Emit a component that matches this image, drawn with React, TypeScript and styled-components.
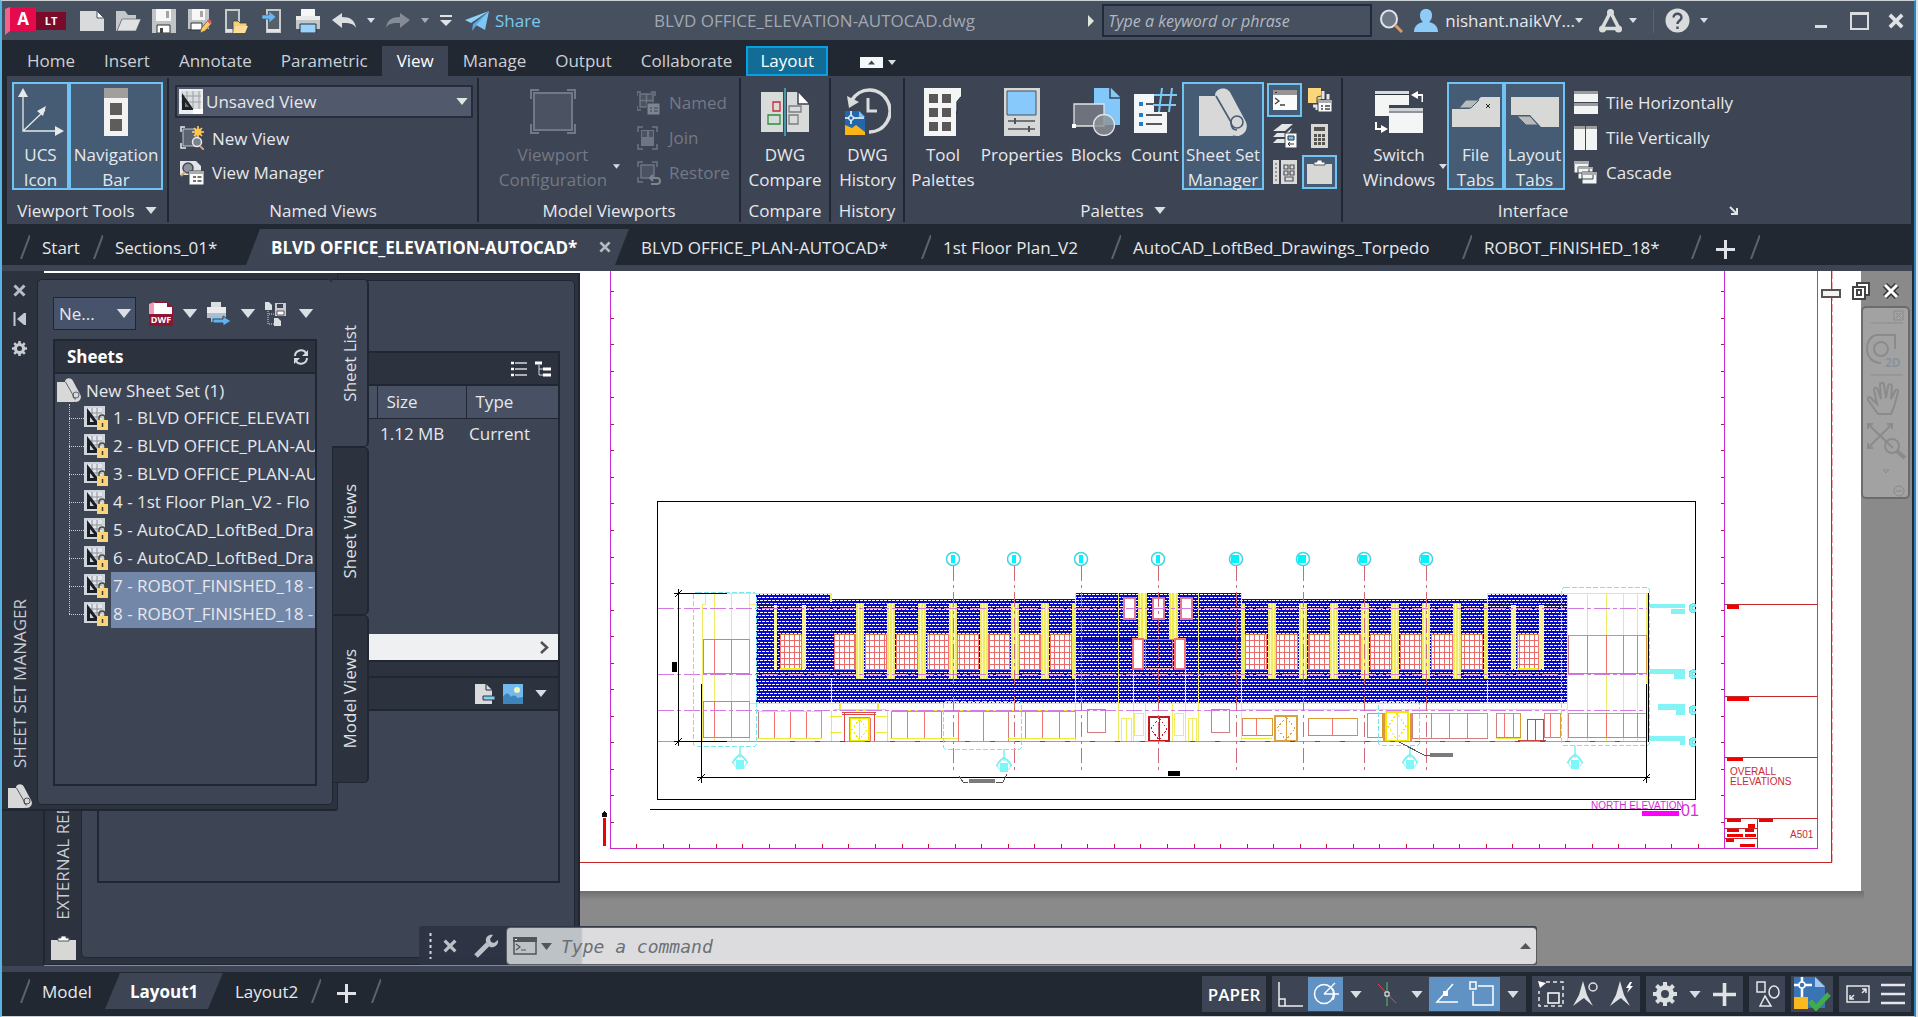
import React from "react";
import styled, { createGlobalStyle, css } from "styled-components";

const c = {
  title: "#46505f",
  dark: "#222831",
  panel: "#3d4453",
  strip: "#2d333e",
  line: "#202632",
  text: "#e6e8ec",
  dim: "#737986",
  on: "#455c74",
  onEdge: "#6fc4f4",
};

const Global = createGlobalStyle`
  * { box-sizing: border-box; }
  body { margin: 0; background: #dfe2e5; font-family: "Open Sans", "Noto Sans", sans-serif; font-size: 17px; color: ${c.text}; }
  button, input, select { font: inherit; color: inherit; background: none; border: 0; padding: 0; margin: 0; border-radius: 0; }
  svg { display: block; flex: none; }
  ul { list-style: none; margin: 0; padding: 0; }
`;

const Frame = styled.div`
  display: flex;
  flex-direction: column;
  height: 100vh;
  min-height: 800px;
  margin-right: 2px;
  overflow: hidden;
  background: ${c.dark};
  border-style: solid;
  border-width: 1px 2px 1px 2px;
  border-color: #cdd2d6 #2a84be #cdd2d6 #56b3e2;
`;

const Center = css`
  display: flex;
  align-items: center;
  justify-content: center;
`;

/* ---------- title bar ---------- */
const TitleBar = styled.header`
  display: flex;
  align-items: center;
  height: 39px;
  flex: none;
  padding-left: 3px;
  background: ${c.title};
`;
const Logo = styled.div`
  display: flex;
  align-items: center;
  width: 69px;
  height: 32px;
`;
const LogoLabel = styled.span`
  ${Center}
  width: 30px;
  height: 18px;
  background: #7a0a2a;
  color: #fff;
  font-size: 11px;
  font-weight: 700;
`;
const IconButton = styled.button<{ $w?: number }>`
  ${Center}
  width: ${(p) => p.$w ?? 36}px;
  height: 32px;
  flex: none;
`;
const Share = styled.button`
  display: flex;
  align-items: center;
  gap: 6px;
  padding-left: 7px;
  color: #7cc8ee;
`;
const FileName = styled.h1`
  flex: 1;
  margin: 0;
  text-align: center;
  font-size: 17px;
  font-weight: 400;
  color: #a2a8b2;
  white-space: nowrap;
`;
const Search = styled.input`
  width: 270px;
  height: 33px;
  margin: 0 7px 0 8px;
  padding-left: 4px;
  border: 2px solid #1f2a3c;
  font-size: 16px;
  font-style: italic;
  &::placeholder { color: #b3b9c4; opacity: 1; }
`;
const User = styled.button`
  display: flex;
  align-items: center;
  gap: 7px;
  margin-left: 11px;
  white-space: nowrap;
`;
const Apps = styled.button`
  display: flex;
  align-items: center;
  gap: 7px;
  margin: 0 5px 0 16px;
`;
const Rule = styled.span`
  width: 1px;
  height: 24px;
  background: #596372;
`;
const WindowControls = styled.div`
  display: flex;
  margin-left: 84px;
`;

/* ---------- menu ---------- */
const MenuBar = styled.nav`
  display: flex;
  align-items: flex-end;
  height: 36px;
  flex: none;
  padding-left: 10px;
`;
const MenuTab = styled.button<{ $on?: boolean; $context?: boolean }>`
  height: 30px;
  padding: ${(p) => (p.$context ? "0 12px" : "0 14px 0 15px")};
  color: ${(p) => (p.$on || p.$context ? "#fff" : "#ccd0d6")};
  background: ${(p) => (p.$context ? "#126c96" : p.$on ? c.panel : "none")};
  border: ${(p) => (p.$context ? "2px solid #06a0e4" : "0")};
  line-height: 26px;
`;
const MenuExtra = styled.button`
  display: flex;
  align-items: center;
  gap: 5px;
  height: 28px;
  margin-left: 32px;
`;

/* ---------- ribbon ---------- */
const Ribbon = styled.section`
  display: flex;
  height: 148px;
  flex: none;
  margin: 0 3px 0 5px;
  background: ${c.panel};
`;
const Group = styled.div<{ $w: number; $last?: boolean }>`
  display: flex;
  flex-direction: column;
  width: ${(p) => p.$w}px;
  flex: none;
  margin: 2px 0;
  border-right: ${(p) => (p.$last ? "0" : `2px solid ${c.line}`)};
`;
const Tools = styled.div<{ $pad?: number }>`
  display: flex;
  height: 112px;
  padding: 4px 0 0 ${(p) => p.$pad ?? 0}px;
`;
const GroupName = styled.div`
  display: flex;
  align-items: center;
  height: 32px;
  padding-top: 8px;
`;
const GroupText = styled.button`
  ${Center}
  flex: 1;
  gap: 10px;
`;
const Big = styled.button<{ $w: number; $on?: boolean }>`
  display: flex;
  flex-direction: column;
  align-items: center;
  gap: 6px;
  width: ${(p) => p.$w}px;
  height: 108px;
  flex: none;
  padding-top: 4px;
  border: 2px solid ${(p) => (p.$on ? c.onEdge : "transparent")};
  background: ${(p) => (p.$on ? c.on : "none")};
  line-height: 25px;
  white-space: pre;
  &:disabled { color: ${c.dim}; }
`;
const Stack = styled.div<{ $ml?: number }>`
  display: flex;
  flex-direction: column;
  padding-top: 3px;
  margin-left: ${(p) => p.$ml ?? 0}px;
`;
const Row = styled.button<{ $gap?: number }>`
  display: flex;
  align-items: center;
  gap: 8px;
  height: 36px;
  padding-left: ${(p) => p.$gap ?? 0}px;
  white-space: nowrap;
  &:disabled { color: ${c.dim}; }
`;
const ViewBox = styled.label`
  display: flex;
  align-items: center;
  gap: 3px;
  width: 298px;
  height: 34px;
  margin-bottom: 3px;
  padding: 0 3px 0 2px;
  border: 2px solid #262c3a;
  background: #515a6d;
`;
const Select = styled.select`
  flex: 1;
  min-width: 0;
  appearance: none;
  outline: 0;
`;
const DownMark = styled.span`
  width: 8px;
  padding-top: 82px;
`;
const Mini = styled.div`
  display: grid;
  grid-template-columns: 35px 35px;
  grid-auto-rows: 34px;
  row-gap: 2px;
  padding-top: 1px;
  margin-left: 3px;
`;
const MiniButton = styled.button<{ $on?: boolean }>`
  ${Center}
  border: 2px solid ${(p) => (p.$on ? c.onEdge : "transparent")};
  background: ${(p) => (p.$on ? c.on : "none")};
`;

/* ---------- tab strips ---------- */
const TabStrip = styled.nav<{ $h: number }>`
  display: flex;
  align-items: flex-end;
  height: ${(p) => p.$h}px;
  flex: none;
  padding-left: 18px;
`;
const FileTab = styled.button<{ $w: number }>`
  width: ${(p) => p.$w}px;
  height: 36px;
  flex: none;
  padding-left: 12px;
  text-align: left;
  white-space: nowrap;
`;
const ActiveTab = styled.div<{ $w: number; $slant: number }>`
  display: flex;
  align-items: center;
  justify-content: space-between;
  width: ${(p) => p.$w}px;
  height: 36px;
  padding: 0 18px 0 25px;
  font-weight: 700;
  color: #fff;
  background: ${c.panel};
  white-space: nowrap;
  clip-path: polygon(${(p) => p.$slant}px 0, 100% 0, calc(100% - ${(p) => p.$slant}px) 100%, 0 100%);
`;
const SlashBox = styled.span`
  ${Center}
  width: 10px;
  height: 36px;
  flex: none;
`;

/* ---------- workspace ---------- */
const Workspace = styled.main`
  position: relative;
  flex: 1;
  min-height: 0;
  margin-right: 2px;
  border: solid ${c.panel};
  border-width: 6px 0;
  background: #8a8a8a;
`;
const Sheet = styled.svg`
  width: 100%;
  height: 100%;
`;
const Dock = styled.div`
  position: absolute;
  left: 0;
  top: 0;
  bottom: 0;
  width: 42px;
  background: ${c.strip};
`;
const Refs = styled.section`
  position: absolute;
  left: 41px;
  top: 2px;
  bottom: 1px;
  width: 537px;
  display: flex;
  padding-right: 3px;
  background: ${c.strip};
  border: solid ${c.line};
  border-width: 1px 2px 1px 2px;
`;
const Strip = styled.div<{ $w: number }>`
  display: flex;
  flex-direction: column;
  align-items: center;
  width: ${(p) => p.$w}px;
  flex: none;
  padding-top: 6px;
`;
const Vertical = styled.span`
  writing-mode: vertical-rl;
  transform: rotate(180deg);
  margin-top: auto;
  line-height: 20px;
  white-space: nowrap;
  color: #c9cdd4;
`;
const Emblem = styled.span<{ $pb?: number }>`
  ${Center}
  width: 26px;
  height: 26px;
  flex: none;
  margin: 15px 0 ${(p) => p.$pb ?? 0}px;
`;
const RefsBody = styled.div`
  display: flex;
  flex-direction: column;
  flex: 1;
  margin: 6px 0;
  padding: 70px 14px 74px 15px;
  background: ${c.panel};
  border: 1px solid ${c.line};
  border-radius: 5px;
`;
const BarHead = styled.div`
  display: flex;
  align-items: center;
  justify-content: flex-end;
  gap: 8px;
  height: 35px;
  flex: none;
  padding-right: 7px;
  background: ${c.strip};
  border: 2px solid ${c.line};
`;
const Splitter = styled.div`
  height: 14px;
  flex: none;
  background: ${c.strip};
  border: solid ${c.line};
  border-width: 0 2px;
`;
const ListBox = styled.div<{ $h?: number }>`
  ${(p) => (p.$h ? `height: ${p.$h}px; flex: none;` : "flex: 1;")}
  border: 2px solid ${c.line};
  border-top: 0;
  display: flex;
  flex-direction: column;
  justify-content: space-between;
`;
const Files = styled.table`
  width: 100%;
  border-collapse: collapse;
  table-layout: fixed;
  th, td { text-align: left; font-weight: 400; padding: 0; line-height: 24px; }
  th { height: 32px; background: #485163; border: solid ${c.line}; border-width: 0 0 1px 1px; padding-left: 9px; }
  td { height: 32px; padding-left: 3px; }
`;
const ScrollBar = styled.button`
  display: flex;
  align-items: center;
  justify-content: flex-end;
  width: 100%;
  height: 26px;
  padding-right: 9px;
  background: #eff0f1;
`;

const SetPalette = styled.section`
  position: absolute;
  left: 0;
  top: 2px;
  display: flex;
  align-items: flex-start;
`;
const Shell = styled.div`
  display: flex;
  width: 336px;
  height: 538px;
  padding-right: 4px;
  background: ${c.strip};
  border: solid ${c.line};
  border-width: 0 1px 2px 0;
  border-radius: 0 0 3px 0;
`;
const StripIcons = styled.div`
  display: flex;
  flex-direction: column;
  align-items: center;
  gap: 15px;
  padding-top: 5px;
`;
const SetBody = styled.div`
  display: flex;
  flex-direction: column;
  flex: 1;
  gap: 9px;
  min-width: 0;
  margin: 6px 0 4px;
  padding: 17px 15px 18px 15px;
  background: ${c.panel};
  border: solid ${c.line};
  border-width: 1px;
  border-radius: 5px;
`;
const SetTools = styled.div`
  display: flex;
  align-items: center;
  height: 33px;
  flex: none;
`;
const SetPick = styled.label`
  display: flex;
  align-items: center;
  width: 83px;
  height: 33px;
  flex: none;
  margin-right: 10px;
  padding: 0 3px 0 5px;
  background: #46536b;
  border: 1px solid ${c.line};
`;
const SheetsBox = styled.div`
  display: flex;
  flex-direction: column;
  flex: 1;
  border: 2px solid ${c.line};
  overflow: hidden;
`;
const SheetsHead = styled.div`
  display: flex;
  align-items: center;
  justify-content: space-between;
  height: 33px;
  flex: none;
  padding: 0 6px 0 12px;
  font-weight: 700;
  color: #fff;
  background: ${c.strip};
  border-bottom: 2px solid ${c.line};
`;
const TreeRoot = styled.div`
  display: flex;
  align-items: center;
  gap: 5px;
  height: 30px;
  padding: 2px 0 0 2px;
  white-space: nowrap;
`;
const Tree = styled.ul`
  position: relative;
  margin-left: 14px;
  &::before {
    content: "";
    position: absolute;
    left: 0;
    top: 0;
    bottom: 14px;
    border-left: 1px dotted #c9ccd2;
  }
`;
const Leaf = styled.li`
  display: flex;
  align-items: center;
  height: 28px;
  &::before {
    content: "";
    width: 15px;
    flex: none;
    border-top: 1px dotted #c9ccd2;
  }
`;
const LeafText = styled.span<{ $on?: boolean }>`
  flex: 1;
  margin-left: 3px;
  padding-left: 2px;
  line-height: 28px;
  white-space: nowrap;
  background: ${(p) => (p.$on ? "#7387a9" : "none")};
`;
const SideTabs = styled.div`
  position: relative;
  display: flex;
  flex-direction: column;
  width: 37px;
  margin: 6px 0 0 -6px;
`;
const SideTab = styled.button<{ $on?: boolean }>`
  ${Center}
  height: 168px;
  background: ${(p) => (p.$on ? c.panel : c.strip)};
  border: solid ${c.line};
  border-width: 1px 2px 1px ${(p) => (p.$on ? 0 : 1)}px;
  border-radius: 0 5px 5px 0;
  span { margin: 0; color: #dde0e4; }
`;

const DocControls = styled.div`
  position: absolute;
  right: 6px;
  top: 4px;
  display: flex;
`;
const NavPane = styled.div`
  position: absolute;
  right: 2px;
  top: 35px;
  width: 49px;
  height: 193px;
  background: #a2a2a2;
  border: 2px solid #6c6c6c;
  border-radius: 5px;
`;
const Command = styled.div`
  position: absolute;
  left: 417px;
  right: 375px;
  bottom: 1px;
  display: flex;
  height: 39px;
  border-radius: 3px;
  background: rgba(45, 51, 66, 0.92);
`;
const CommandTools = styled.div`
  display: flex;
  align-items: center;
  gap: 11px;
  width: 87px;
  flex: none;
  padding-left: 10px;
`;
const CommandField = styled.div`
  display: flex;
  align-items: center;
  gap: 4px;
  flex: 1;
  height: 38px;
  margin-top: 1px;
  padding: 0 5px 0 6px;
  border: 1px solid #5a5d60;
  border-radius: 4px;
  background: linear-gradient(90deg, #bdc2c6 74px, #dcdcde 76px);
`;
const CommandInput = styled.input`
  flex: 1;
  margin-left: 5px;
  font-family: "DejaVu Sans Mono", monospace;
  font-size: 18px;
  font-style: italic;
  &::placeholder { color: #6c7075; opacity: 1; }
`;

/* ---------- bottom bar ---------- */
const Bottom = styled.footer`
  display: flex;
  justify-content: space-between;
  height: 44px;
  flex: none;
  background: ${c.dark};
`;
const Status = styled.div`
  display: flex;
  align-items: flex-start;
  gap: 6px;
  padding: 4px 3px 0 0;
`;
const StatusBox = styled.div`
  display: flex;
  height: 36px;
  padding: 1px;
  background: ${c.panel};
`;
const StatusButton = styled.button<{ $w?: number; $on?: boolean }>`
  ${Center}
  width: ${(p) => p.$w ?? 35}px;
  height: 34px;
  background: ${(p) => (p.$on ? "#6092c4" : "none")};
  white-space: nowrap;
`;
const Paper = styled(StatusButton)`
  width: 62px;
  font-weight: 600;
  color: #fff;
`;

/* ---------- icons ---------- */
type KidsProps = { w?: number; h?: number; vb?: string; children?: React.ReactNode };
const I = ({ w = 24, h = 24, vb, children }: KidsProps) => (
  <svg width={w} height={h} viewBox={vb ?? `0 0 ${w} ${h}`} fill="none" aria-hidden="true">{children}</svg>
);
const Caret = ({ w = 8, color = "#d9dde4" }: { w?: number; color?: string }) => (
  <I w={w} h={Math.ceil(w / 2) + 1} vb="0 0 8 5"><path d="M0 0h8L4 5z" fill={color} /></I>
);
const Slash = () => (
  <SlashBox><I w={10} h={24}><path d="M1 24L10 0" stroke="#5b626e" strokeWidth="2" /></I></SlashBox>
);
const Plus = ({ size = 19 }: { size?: number }) => (
  <I w={size} h={size} vb="0 0 19 19"><path d="M9.500 0v19M0 9.500h19" stroke="#dfe2e6" strokeWidth="3" /></I>
);
const Cross = ({ size = 13, color = "#c4c7cd" }: { size?: number; color?: string }) => (
  <I w={size} h={size} vb="0 0 13 13"><path d="M1.500 1.500l10 10M11.500 1.500l-10 10" stroke={color} strokeWidth="3" /></I>
);
const NewIcon = () => <I w={24} h={20}><path d="M0 0h17l7 7v13H0z" fill="#d8dadb" /><path d="M17 0v7h7z" fill="#fff" stroke="#46505f" /></I>;
const OpenIcon = () => <I w={25} h={20}><path d="M0 20V0h9l3 4h8v4H6L1 20z" fill="#c5c8ca" /><path d="M6 8h19l-5 12H1z" fill="#dfe1e2" stroke="#46505f" strokeWidth=".6" /></I>;
const SaveIcon = () => (
  <I><path d="M0 0h24v24H0z" fill="#c1c4c6" /><path d="M4 0h15v12H4z" fill="#f7f7f7" /><path d="M14 2h3v7h-3z" fill="#a5a5a5" /><path d="M5 16h13v8H5z" fill="#fff" stroke="#333" /><path d="M8 19h3v5H8z" fill="#444" /></I>
);
const SaveAsIcon = () => (
  <I><path d="M0 0h21v20H0z" fill="#c1c4c6" /><path d="M4 0h13v11H4z" fill="#f7f7f7" /><path d="M12 2h3v6h-3z" fill="#a5a5a5" /><path d="M3 14h11v7H3z" fill="#fff" stroke="#333" /><path d="M12 24l1.500-5 7-8 3.500 3-7 8z" fill="#ffc95c" stroke="#4a4a4a" strokeWidth=".7" /><path d="M19 12l2-2 3 3-2 2z" fill="#e4516a" /></I>
);
const MobileOpenIcon = () => (
  <I w={23} h={24}><path d="M1 1h13v22H1z" fill="#56606b" stroke="#c7cacc" strokeWidth="2" /><path d="M1 20h13v3H1z" fill="#e3e3e3" /><path d="M8 24V12h5l2 2h7v3l-3 7z" fill="#f7cf78" stroke="#3a3f48" strokeWidth=".8" /><path d="M11 17h12l-3 7H8z" fill="#ffdf98" /></I>
);
const MobileSaveIcon = () => (
  <I w={20} h={24}><path d="M5 1h13v22H5z" fill="#56606b" stroke="#c7cacc" strokeWidth="2" /><path d="M5 20h13v3H5z" fill="#e3e3e3" /><path d="M0 6h7V2l7 6-7 6v-4H0z" fill="#64b9f2" stroke="#46505f" strokeWidth=".6" /></I>
);
const PrintIcon = () => (
  <I><path d="M5 0h14v7H5z" fill="#f7f7f7" /><path d="M0 7h24v4H0z" fill="#e9eaeb" /><path d="M0 11h24v9H0z" fill="#c3c6c8" /><path d="M4 15h16v9H4z" fill="#9ad2fb" stroke="#2b323d" /></I>
);
const UndoIcon = ({ color = "#dcdfe2", flip = false }) => (
  <I w={24} h={16}><path transform={flip ? "translate(24 0) scale(-1 1)" : undefined} d="M0 7L10 0v4c8 0 13 3 14 11-3-5-7-5-14-5v5z" fill={color} /></I>
);
const PlaneIcon = () => (
  <I w={24} h={20}><path d="M24 0L0 9l6 3z" fill="#8fd3fb" /><path d="M24 0L8 13l-1 7 4-5z" fill="#58a9dd" /><path d="M24 0L11 14l9 5z" fill="#7cc7f7" /></I>
);
const GlassIcon = () => <I><ellipse cx="10" cy="10" rx="8" ry="8.500" fill="#6d7886" stroke="#dfe2e6" strokeWidth="2" /><path d="M16 16l7 7" stroke="#d69a6c" strokeWidth="3" /></I>;
const UserIcon = () => <I><path d="M12 0c4 0 6 2.500 6 6.500 0 3-1 5-3 6.500 5 1 9 4 9 10H0c0-6 4-9 9-10-2-1.500-3-3.500-3-6.500C6 2.500 8 0 12 0z" fill="#8ecbf8" /></I>;
const AppsIcon = () => <I w={23} h={24}><path d="M11.500 3L3 19.500h17z" stroke="#d9dcd9" strokeWidth="3.500" /><circle cx="11.500" cy="3.500" r="3.500" fill="#d9dcd9" /><circle cx="3.500" cy="20" r="3.500" fill="#d9dcd9" /><circle cx="19.500" cy="20" r="3.500" fill="#d9dcd9" /></I>;
const HelpIcon = () => <I w={25} h={25}><circle cx="12.500" cy="12.500" r="12" fill="#d9dbdd" /><path d="M8.500 9.500c0-5 8-5 8 0 0 3-4 3-4 6.500M12.500 18.500v2.500" stroke="#46505f" strokeWidth="2.400" /></I>;
const UcsIcon = () => (
  <I w={46} h={48}><path d="M5 4v39h36M5 43L27 22" stroke="#e6e8ea" strokeWidth="1.300" /><path d="M0 9L5 0l5 9zM37 38l9 5-9 5zM19 23l9-5-3 10z" fill="#e6e8ea" /></I>
);
const NavBarIcon = () => <I w={24} h={48}><path d="M0 0h24v10H0z" fill="#a19f9d" /><path d="M0 10h24v38H0z" fill="#f3f2f1" /><path d="M6 15h12v12H6zM6 31h12v12H6z" fill="#5f5d5b" /></I>;
const ViewIcon = () => (
  <I w={24} h={25}><path d="M0 0h24v25H0z" fill="#eceeee" /><path d="M2 2h20v19H2z" fill="#dadddf" /><path d="M8 2v19M14 2v19M20 2v19M2 7h20M2 13h20" stroke="#9aa0a5" /><path d="M3 4v17h12z" fill="#1d2229" /><path d="M6 13v5h4z" fill="#777" /><path d="M14 20h10v5H14z" fill="#fff" /></I>
);
const NewViewIcon = () => (
  <I><path d="M5 1H1v5M1 17v5h5" stroke="#e9ebee" strokeWidth="1.500" /><path d="M3 3h13v17H3z" fill="#5b6271" stroke="#dfe2e6" strokeWidth=".8" /><path d="M18 0v12M12 6h12M14 2l8 8M22 2l-8 8" stroke="#ffd36b" strokeWidth="1.600" /><circle cx="18" cy="6" r="3.500" fill="#ffc54a" /><circle cx="17" cy="16" r="4.500" fill="#7b828e" stroke="#e9ebee" strokeWidth="1.500" /><path d="M20 20l4 4" stroke="#d9a066" strokeWidth="2" /></I>
);
const ViewManagerIcon = () => (
  <I><path d="M0 0h16l5 5v9H0z" fill="#e2e4e6" /><circle cx="8" cy="7" r="5" fill="#8d939c" stroke="#444b57" strokeWidth="1.500" /><path d="M5 11l-4 4" stroke="#d9a066" strokeWidth="2" /><path d="M9 10h15v14H9z" fill="#fafafa" stroke="#3d4453" /><path d="M9 10h15v3H9z" fill="#aaa" /><path d="M13 16h3M13 20h3M17.500 16h4M17.500 20h4" stroke="#444" strokeWidth="1.500" /></I>
);
const VportIcon = () => <I w={46} h={48}><path d="M1 11V2h8M37 2h8v9M45 36v9h-8M9 45H1v-9" stroke="#727986" strokeWidth="2" /><path d="M4 5h38v37H4z" fill="#4b5262" stroke="#727986" strokeWidth="2" /></I>;
const NamedVpIcon = () => <I><path d="M0 5V1h4M14 1h4v4M0 15v4h4" stroke="#6f7683" strokeWidth="1.500" /><path d="M3 3h13v13H3zM9.500 3v13M3 9.500h13" stroke="#6f7683" strokeWidth="1.500" fill="#4b5262" /><path d="M10 12h13v12H10z" fill="#7e8591" stroke="#3d4453" /><path d="M13 17h2M13 20h2M17 17h4M17 20h4" stroke="#3d4453" /></I>;
const JoinVpIcon = () => <I><path d="M1 6V1h5M15 1h5v5M1 18v5h5M15 23h5v-5" stroke="#6f7683" strokeWidth="1.500" /><path d="M4 4h13v16H4z" fill="#6f7683" /><path d="M5 5h5v6H5zM12 5h4v6h-4z" fill="#4b5262" /></I>;
const RestoreVpIcon = () => <I><path d="M1 6V1h5M15 1h5v5M1 16v5h5" stroke="#6f7683" strokeWidth="1.500" /><path d="M4 4h13v13H4z" fill="#4b5262" stroke="#6f7683" strokeWidth="1.500" /><path d="M16 14l-3 3 3 3M13 17h7a3 3 0 010 6h-6" stroke="#7e8591" strokeWidth="2" /></I>;
const CompareIcon = () => (
  <I w={48} h={48}><path d="M0 4h22v40H0z" fill="#d9dbda" /><path d="M26 4h10l12 12v28H26z" fill="#d9dbda" /><path d="M37 3v13h12z" fill="#fff" stroke="#3d4453" strokeWidth="1.500" /><path d="M12 14h7v9h-7z" stroke="#cb2a35" strokeWidth="1.300" /><path d="M7 27h12v9H7z" stroke="#23923a" strokeWidth="1.300" /><path d="M28 18h12v6H28zM28 27h9v9h-9z" stroke="#7a7d80" strokeWidth="1.300" /><path d="M24 0v48" stroke="#4fd0de" strokeWidth="1.200" /></I>
);
const HistoryIcon = () => (
  <I w={46} h={48}><path d="M7 12A20.500 21 0 1124 44" stroke="#dadcdb" strokeWidth="3.500" /><path d="M2 8l2 12 10-6z" fill="#dadcdb" /><path d="M23 10v13h9" stroke="#dadcdb" strokeWidth="3" /><path d="M0 23h14l6 6v18H0z" fill="#2267ab" /><path d="M14 23v6h6z" fill="#86bdec" /><path d="M0 37l7 3 4-3 9 7v3H0z" fill="#fab518" /><path d="M0 30h19M6 23v13" stroke="#fff" strokeWidth="1.500" /><path d="M4 28h4v4H4z" fill="#2267ab" stroke="#fff" /></I>
);
const ToolPalIcon = () => (
  <I w={38} h={48}><path d="M0 0h37v10l-4 5v7l-1 2v24H0z" fill="#f4f6f5" />{[6, 20, 34].map((y) => [5, 18].map((x) => <path key={`${x}-${y}`} d={`M${x} ${y}h9v9h-9z`} fill="#5a5856" />))}<path d="M37 9l-4 5v11" stroke="#2c3340" strokeWidth="1.300" /></I>
);
const PropsIcon = () => <I w={36} h={48}><path d="M0 0h36v48H0z" fill="#d6d8d7" /><path d="M3 3h29v24H3z" fill="#88c9fb" stroke="#44505c" /><path d="M4 33h27M4 41h27" stroke="#4f5357" strokeWidth="1.300" /><path d="M11 30v6M25 38v6" stroke="#4f5357" strokeWidth="2" /></I>;
const BlocksIcon = () => (
  <I w={48} h={48}><path d="M22 0h17l9 9v28H22z" fill="#82c8fa" /><path d="M38 0v10h10" stroke="#3d4453" strokeWidth="1.500" /><path d="M2 16h30v22H2z" fill="#6d727c" stroke="#e1e3e5" strokeWidth="1.300" /><circle cx="32" cy="37" r="10.500" fill="#8d9197" fillOpacity=".8" stroke="#e1e3e5" strokeWidth="1.300" /><path d="M0 36h4v4H0z" fill="#fff" /></I>
);
const CountIcon = () => (
  <I w={43} h={48}><path d="M0 6h20v18h13v21H0z" fill="#f3f5f6" />{[14, 25, 34].map((y) => <g key={y}><path d={`M5 ${y}h4v4H5z`} fill="#1a7fd0" /><path d={`M12 ${y + 2}h${y === 14 ? 8 : 16}`} stroke="#56595c" strokeWidth="2" /></g>)}<path d="M20 7h23M19 17h23M28 0l-3 24M38 0l-3 24" stroke="#7cc9f6" strokeWidth="2" /></I>
);
const SheetSetIcon = ({ s = 48, bg = c.on }: { s?: number; bg?: string }) => (
  <I w={s} h={s} vb="0 0 48 48"><path d="M0 8h18l16 26v14H0z" fill="#d7d8d7" /><path d="M16 7C17-1 29-2 32 6l15 28c3 8-3 14-9 14-5 0-8-3-8-8z" fill="#d7d8d7" /><path d="M17 8l15 26" stroke={bg} strokeWidth="1.600" /><circle cx="38" cy="34" r="6" stroke={bg} strokeWidth="1.600" /><path d="M32 34c0 6 2 8 6 8" stroke={bg} strokeWidth="1.600" /></I>
);
const TermIcon = () => <I w={24} h={20}><path d="M0 0h24v20H0z" fill="#fbfbfb" /><path d="M0 0h24v5H0z" fill="#979593" /><path d="M2 2h2v1H2z" fill="#333" /><path d="M2 8l4 3-4 3M7 15h5" stroke="#3e4246" strokeWidth="1.300" /></I>;
const MarkupIcon = () => <I><path d="M0 0h13v11l-4 4H0z" fill="#fcd67a" /><path d="M15 3v8M20 6v6M5 18h4v4" stroke="#e5e7e8" strokeWidth="3" /><path d="M13 8l-4 1v6" stroke="#3d4453" /><path d="M10 12h14v12H10z" fill="#fafafa" stroke="#3d4453" /><path d="M10 12h14v3H10z" fill="#aaa" /><path d="M13 18h2M13 21h2M17 18h5M17 21h5" stroke="#444" strokeWidth="1.500" /></I>;
const LayersIcon = () => <I><path d="M0 7L9 0h11l-8 7zM0 13l4-4h9l6-5-5 9zM0 19l4-4h9v4z" fill="#e3e5e6" /><path d="M12 9h12v15H12z" fill="#fafafa" stroke="#3d4453" /><path d="M15 12h6v4h-6z" fill="#6ec1f5" stroke="#333" /><path d="M15 20h6M17 18l-2 2 2 2" stroke="#333" /></I>;
const CalcIcon = () => <I w={17} h={24}><path d="M0 0h17v24H0z" fill="#d8d8d6" /><path d="M3 3h11v4H3z" fill="#56544f" />{[10, 14, 18].map((y) => [3, 7, 11].map((x) => <path key={`${x}-${y}`} d={`M${x} ${y}h3v3h-3z`} fill="#56544f" />))}</I>;
const DesignIcon = () => <I><path d="M0 0h6v24H0zM8 0h16v24H8z" fill="#dadbd9" /><path d="M2 4h2M2 8h2M2 12h2M2 16h2M2 20h2M11 5h4v4h-4zM17 5h4v4h-4zM11 11h4v4h-4zM17 11h4v4h-4zM12 17h8v4h-8z" stroke="#4c5058" strokeWidth="1.200" /></I>;
const ClipIcon = () => <I w={25} h={24}><path d="M0 4h25v20H0z" fill="#d7d8d6" /><path d="M7 5V2h3V0h5v2h3v3z" fill="#fff" stroke="#4c5865" /></I>;
const SwitchIcon = () => (
  <I w={48} h={48}><path d="M0 3h34v14H14v11H0z" fill="#f4f6f6" /><path d="M0 3h34v3H0z" fill="#d9dcdd" /><path d="M0 6.500h34M14 22.500h34" stroke="#2d333e" /><path d="M14 20h34v25H14z" fill="#f4f6f6" /><path d="M14 20h34v3H14z" fill="#cfd3d5" /><path d="M14 24h34" stroke="#2d333e" /><path d="M36 7l7-4v3h5v8h-1.500V8H43v3zM13 41l-7-4v3H2v-6H0v8h6v3z" fill="#fff" /></I>
);
const FileTabsIcon = () => <I w={48} h={48}><path d="M0 21h17L29 9h19v30H0z" fill="#d8d9d7" /><path d="M7 20l7-8h13l-8 8z" fill="#b9bbba" stroke={c.on} /><path d="M34 16l4 4M38 16l-4 4" stroke="#222" /></I>;
const LayoutTabsIcon = () => <I w={48} h={48}><path d="M0 9h48v30H30L19 27H0z" fill="#d8d9d7" /><path d="M6 28h13l8 9H15z" fill="#b9bbba" stroke={c.on} /></I>;
const TileHIcon = () => <I w={24} h={23}><path d="M0 0h24v11H0zM0 12h24v11H0z" fill="#f3f5f5" /><path d="M0 0h24v3H0zM0 12h24v3H0z" fill="#9b9b9a" /></I>;
const TileVIcon = () => <I w={24} h={24}><path d="M0 0h11v24H0zM12 0h11v24H12z" fill="#f3f5f5" /><path d="M0 0h11v3H0zM12 0h11v3H12z" fill="#9ba09a" /></I>;
const CascadeIcon = () => <I><path d="M0 0h15v12H0zM4 6h15v12H4zM8 11h15v12H8z" fill="#f3f5f5" stroke={c.panel} /><path d="M0 0h15v3H0zM4 6h15v2H4zM8 11h15v3H8z" fill="#a9abaa" /></I>;
const RefreshIcon = () => <I w={16} h={16}><path d="M2 7a6 6 0 0111-3M14 9a6 6 0 01-11 3" stroke="#d5d8dc" strokeWidth="2" /><path d="M15 1v6H9zM1 15V9h6z" fill="#d5d8dc" /></I>;
const GearIcon = ({ s = 16, color = "#c9ccd0" }: { s?: number; color?: string }) => (
  <I w={s} h={s} vb="0 0 24 24"><circle cx="12" cy="12" r="6.500" stroke={color} strokeWidth="5" /><path d="M12 0v5M12 19v5M0 12h5M19 12h5M3.500 3.500l4 4M16.500 16.500l4 4M20.500 3.500l-4 4M7.500 16.500l-4 4" stroke={color} strokeWidth="4" /></I>
);
const PinIcon = () => <I w={13} h={14}><path d="M1.500 0v14" stroke="#c4c7cd" strokeWidth="2" /><path d="M11 1v12L4 7z" fill="#c4c7cd" /><path d="M12 1v12" stroke="#c4c7cd" strokeWidth="2" /></I>;
const SheetLeafIcon = () => (
  <I w={24} h={24}><path d="M0 0h21v21H0z" fill="#cfd3dc" /><path d="M3 2h15v13H3z" fill="#e2e5ea" /><path d="M8 2v13M13 2v13M3 7h15M3 11h15" stroke="#8a8f99" /><path d="M3 2v17h13z" fill="#1a1e25" /><path d="M6 11v5h4z" fill="#cfd3dc" /><path d="M15 15v-3c0-4 6-4 6 0v3" stroke="#4c4a3c" strokeWidth="1.500" /><path d="M13 14h11v10H13z" fill="#fbd47a" /><path d="M18.500 17v4" stroke="#3d3b33" strokeWidth="1.500" /></I>
);
const DwfIcon = () => (
  <svg width="24" height="24" viewBox="0 0 24 24" aria-hidden="true"><path d="M0 3h4V0h14l6 5v19H0z" fill="#8c1434" /><path d="M0 2l5-2v12H0z" fill="#f29bb5" /><path d="M5 1h13v4h5v7H5z" fill="#fff" /><text x="12" y="21" fontSize="9" fontWeight="700" fill="#fff" textAnchor="middle" fontFamily="Open Sans, sans-serif">DWF</text></svg>
);
const PrintGoIcon = () => <I><path d="M4 0h10v6H4z" fill="#dcdfe1" /><path d="M0 5h19v9H0z" fill="#e8eaeb" /><path d="M0 11h19v5H0z" fill="#b8bbbf" /><path d="M4 14h11v6H4z" fill="#86c7f2" /><path d="M6 17h10v-3l8 5-8 5v-3H6z" fill="#5eb4ef" stroke="#3d4453" /></I>;
const TreeSaveIcon = () => <I><path d="M0 0h4l3 3v5H0zM9 16h4l3 3v5H9z" fill="#dcdfe1" /><path d="M3 9v13M4 12h5M4 22h5" stroke="#dcdfe1" strokeDasharray="1 1" /><path d="M10 1h11v13H10z" fill="#c9cccf" /><path d="M12 2h6v4h-6z" fill="#3d4453" /><path d="M12 9h7v4h-7z" fill="#fff" stroke="#333" strokeWidth=".8" /></I>;
const ListIcon = () => <I w={16} h={16}><path d="M0 2h3M0 8h3M0 14h3" stroke="#fff" strokeWidth="2.500" /><path d="M4 2h12M4 8h12M4 14h12" stroke="#d5d8dc" strokeWidth="1.500" /></I>;
const DetailIcon = () => <I w={16} h={16}><path d="M0 2h7M8 8h8M8 14h8" stroke="#fff" strokeWidth="3" /><path d="M4 4v10h4M4 8h4" stroke="#d5d8dc" /></I>;
const DocIcon = () => <I w={20} h={20}><path d="M0 0h11l6 6v14H0z" fill="#d9dbdd" /><path d="M11 0v6h6" stroke="#222831" /><path d="M8 12h12v4H8z" fill="#7fd0ee" stroke="#2d333e" /></I>;
const ImageIcon = () => <I w={20} h={20}><path d="M0 0h20v20H0z" fill="#72b9ee" /><path d="M0 13c3-5 6-4 8 0 2-2 5-2 6 1l6-1v7H0z" fill="#3f85bd" /><circle cx="14" cy="6" r="3" fill="#f5f3b9" /></I>;
const WrenchIcon = () => <I w={24} h={24}><path d="M2 22L14 10" stroke="#bcc0c8" strokeWidth="5" /><path d="M12 8c-1-4 2-8 7-7l-3 4 1 3 3 1 4-3c1 5-4 8-8 7z" fill="#bcc0c8" /></I>;
const CmdIcon = () => <I w={24} h={18}><path d="M1 1h22v16H1z" stroke="#50565b" strokeWidth="1.500" /><path d="M0 0h24v5H0z" fill="#50565b" /><path d="M2 2h2v1H2z" fill="#fff" /><path d="M3 7l4 3-4 3M8 13h5" stroke="#50565b" strokeWidth="1.200" /></I>;

/* ---------- drawing ---------- */
const Y = "#f0ec66";
const R = "#f47474";
const M = "#cf7be0";
const bay = (x: number, w: number, key: string) => (
  <g key={key}><rect x={x} y={603} width={w} height={76} fill="#fbfac4" /><path d={`M${x + 1} 603v76M${x + w / 2} 603v76M${x + w - 1} 603v76`} stroke={Y} strokeWidth="2" /></g>
);
const grid = (x: number, w: number, top = 634) => (
  <g key={`g${x}`}><rect x={x} y={top} width={w} height={669 - top} fill="url(#panes)" stroke={R} /><path d={`M${x} ${top}.5h${w}`} stroke="#cf7a2c" /></g>
);
const frame = (x: number, y: number, w: number, h: number, mull: number[], s = "#cf7f7f", top = "#dc9a35") => (
  <g key={`f${x}-${y}`}><rect x={x + 0.5} y={y + 0.5} width={w} height={h} stroke={s} strokeWidth="1.400" fill="#fff" /><path d={`M${x} ${y}.5h${w}`} stroke={top} strokeWidth="1.400" /><path d={`M${x + w}.5 ${y}v${h}`} stroke="#dc9a35" /><path d={mull.map((m) => `M${m}.5 ${y}v${h}`).join("")} stroke={R} strokeWidth="1.400" /></g>
);
const marker = (x: number, y: number) => (
  <g key={`m${x}`}><path d={`M${x} ${y - 16}v12M${x - 8} ${y + 1}l8-9 8 9`} stroke="#7ff0f3" strokeWidth="1.500" /><circle cx={x} cy={y} r="6.500" stroke="#7ff0f3" /><rect x={x - 4} y={y - 2} width="8" height="9" fill="#7ff7f9" /></g>
);
const door = (x: number, w: number, y: number, s: string) => (
  <g key={`d${x}`}><rect x={x} y={y} width={w} height={741 - y} stroke={s} strokeWidth="2" fill="#fff" /><path d={`M${x + w / 2} ${y}v${741 - y}`} stroke={s} /><path d={`M${x + w / 2} ${y + 1}L${x + 2} ${(y + 741) / 2}L${x + w / 2} 740L${x + w - 2} ${(y + 741) / 2}z`} stroke={s} strokeDasharray="2 2" /></g>
);

const Drawing = () => (
  <Sheet viewBox="2 271 1910 695" preserveAspectRatio="xMinYMin meet" fill="none" role="img" aria-label="North elevation drawing" shapeRendering="crispEdges">
    <defs>
      <pattern id="brick" x="756" y="593" width="8" height="6" patternUnits="userSpaceOnUse">
        <rect width="8" height="6" fill="#0808c8" />
        <path d="M0 1h3v1h-3zM4 1h3v1h-3zM2 4h3v1h-3zM6 4h2v1h-2zM0 4h1v1h-1z" fill="#fff" />
      </pattern>
      <pattern id="panes" x="834" y="634" width="5" height="6" patternUnits="userSpaceOnUse">
        <rect width="5" height="6" fill="#fff" /><path d="M0 .5h5M.5 0v6" stroke="#ea6a6a" strokeWidth="1.600" />
      </pattern>
      <linearGradient id="fall" x1="0" x2="0" y1="0" y2="1"><stop offset="0" stopColor="#6b706e" /><stop offset="1" stopColor="#8a8a8a" /></linearGradient>
    </defs>
    <rect x="578" y="891" width="1286" height="9" fill="url(#fall)" />
    <path d="M2 271h1859v620H2z" fill="#fff" />

    <path d="M1831.500 271v591" stroke="#c42626" />
    <path d="M1832.500 271v591" stroke="#f0b0b0" strokeDasharray="8 3" />
    <path d="M560 862.500h1272" stroke="#c42626" />
    <path d="M610.500 271v577.500h1207V271M1724.500 271v577" stroke="#c52ccb" />
    {Array.from({ length: 21 }, (_, k) => Math.round(291 + 26.55 * k) + 0.5).map((y) => <path key={y} d={`M611 ${y}h3M1721 ${y}h3`} stroke="#c8142c" />)}
    {Array.from({ length: 41 }, (_, k) => Math.round(636 + 26.55 * k) + 0.5).map((x) => <path key={x} d={`M${x} 844v4`} stroke="#c8142c" />)}
    <path d="M1725 604.500h92M1725 696.500h92M1725 757.500h92M1725 818.500h92M1757.500 818v30M1725 828.500h32M1725 838.500h32" stroke="#c4262c" />
    <path d="M1727 605h12v4h-12zM1727 697h22v4h-22zM1727 758h16v3h-16zM1727 819h14v3h-14zM1759 819h14v3h-14zM1748 824h7v4h-7zM1727 829h12v3h-12zM1745 829h9v3h-9zM1727 834h16v3h-16zM1745 834h11v3h-11zM1726 839h8v3h-8zM1740 844h15v3h-15zM603 818h3v28h-3z" fill="#f20000" />
    <path d="M604.500 811l3 3-1 3h-4l-1-3z" fill="#111" />
    <g fontFamily="Liberation Sans, sans-serif" fontSize="10" fill="#c92a34">
      <text x="1730" y="775">OVERALL</text>
      <text x="1730" y="785">ELEVATIONS</text>
      <text x="1790" y="838">A501</text>
      <text x="1591" y="809" fill="#d32fd6">NORTH ELEVATION</text>
      <text x="1681" y="816" fontSize="16" fill="#d32fd6">01</text>
    </g>
    <path d="M1642 811h37v5h-37z" fill="#ff00ff" />
    <path d="M657.500 501.500h1038v298h-1038zM650 809.500h1031" stroke="#000" />

    {["M756 593h75v110h-75z", "M831 599h244v104H831z", "M1075 593h166v110h-166z", "M1241 599h246v104h-246z", "M1487 594h80v109h-80z"].map((d) => <path key={d} d={d} fill="url(#brick)" />)}
    <path d="M831 599.500h244M1241 599.500h246M1075 593.500h43M1199 593.500h42M1075 639.500h58M1185 639.500h56M758 604.500h14M1487 604.500h24M1544 604.500h23" stroke="#151550" />
    <path d="M756 593.500h75v8M831.500 678v25M1075.500 593v148M1241.500 593v148M1487.500 603v-9.500h80v10M1487.500 680v23M756 703.500h811M1118.500 593v148M1198.500 593v148M1133.500 669v72M1185.500 669v72" stroke={Y} strokeWidth="1.400" />
    {[856, 887, 918, 949, 980, 1011, 1041].map((x) => bay(x, 8, `l${x}`))}
    {[1268, 1299, 1330, 1361, 1391, 1422, 1453].map((x) => bay(x, 8, `r${x}`))}
    {[1072, 1241, 1484].map((x) => bay(x, 4, `e${x}`))}
    {[834, 865, 896, 927, 957, 988, 1019, 1050, 1245, 1276, 1308, 1339, 1370, 1400, 1431, 1461].map((x) => grid(x, 21))}
    {[[774, 3], [802, 4], [1511, 5], [1539, 5]].map(([x, w]) => <rect key={x} x={x} y="605" width={w} height="64" fill="#f6f39a" />)}
    {grid(780, 21)}{grid(1517, 21)}
    <path d="M780 668.500h21M1517 668.500h21" stroke="#f5f000" strokeWidth="2" />
    {[1138, 1169].map((x) => <g key={x}><rect x={x} y="593" width="9" height="46" fill="#fbfa9c" /><path d={`M${x + 1} 593v46M${x + 4} 593v46M${x + 8} 593v46`} stroke="#eeea50" strokeWidth="1.500" /></g>)}
    {[1124, 1153, 1181].map((x) => <rect key={x} x={x} y="598" width="11" height="21" fill="#fff" stroke="#e07a90" strokeWidth="1.400" />)}
    <path d="M1145.500 639.500h27v29h-27z" stroke="#c87a9c" strokeWidth="1.400" />
    <path d="M1133 639h10v30h-10zM1175 639h10v30h-10z" fill="#fff" stroke={R} strokeWidth="2" />
    <path d="M1132 639.500h54" stroke="#dc8a35" />

    <path d="M702.500 604v137M705.500 593v12M714.500 593v148M731.500 593v148M749.500 593v148M702 604.500h4M749 604.500h7M749 703.500h7M700 593.500h56M1567 593.500h80v148M1567.500 593v148M1587.500 593v148M1606.500 593v148M1623.500 593v148M1637.500 593v148" stroke={Y} strokeWidth="1.400" />
    {frame(703, 639, 46, 34, [714, 731], "#d07f86", "#d07f86")}{frame(703, 701, 46, 36, [714, 731], "#d07f86", "#d07f86")}
    {frame(1568, 635, 78, 38, [1587, 1606, 1623, 1637])}{frame(1568, 713, 78, 24, [1587, 1606, 1623, 1637])}
    {frame(758, 711, 63, 27, [774, 790, 806])}
    {frame(891, 711, 67, 27, [907, 924, 941])}{frame(958, 711, 50, 30, [983], R)}{frame(1008, 711, 67, 27, [1025, 1042, 1059])}
    <path d="M757 738.500h65M890 738.500h68M1008 738.500h68M830 716.500h12M830 732.500h12M876 716.500h12M876 732.500h12M831.500 711v30M887.500 711v30M840 703.500h38v7h-38zM834 709.500h52M1242 738.500h30M1496 738.500h25M756 711.500h65M891 710.500h184M1242 709.500h325" stroke="#eeea3c" strokeWidth="1.400" />
    <path d="M842 712.500h34M842 714.500h34M844.500 712v29M874.500 712v29" stroke="#dd4848" />
    {door(850, 19, 718, "#eeea00")}
    <path d="M849.500 718v23M870.500 718v23M849 717.500h21" stroke={R} />
    {[1087, 1211].map((x) => <rect key={x} x={x + 0.5} y="709.500" width="18" height="23" stroke="#cf7f7f" strokeWidth="1.400" />)}
    <path d="M1121.500 718.500h10v23h-10zM1126.500 718v23M1134.500 713.500h9v22h-9zM1174.500 713.500h9v22h-9zM1188.500 718.500h8v23h-8zM1192.500 718v23M1145.500 703v38M1172.500 703v38" stroke={Y} strokeWidth="1.400" />
    {door(1149, 20, 717, "#c41a22")}
    {frame(1242, 718, 30, 17, [1256])}{door(1275, 22, 716, "#dca040")}{frame(1308, 718, 49, 17, [1332])}
    {frame(1367, 713, 15, 24, [])}{door(1386, 22, 712, "#efea00")}{frame(1412, 713, 75, 25, [1431, 1449, 1467])}
    <path d="M1384 713v28M1411 713v28" stroke="#dc9a35" strokeWidth="2" />
    {frame(1496, 713, 24, 24, [1504, 1513])}{frame(1544, 713, 16, 24, [1550])}
    <path d="M1527.500 741v-22h16v22M1535.500 719v22M1518 740.500h28" stroke="#c44848" />

    <path d="M658 608.500h989M658 674.500h989M658 710.500h989" stroke={M} strokeDasharray="16 3 4 3" />
    <path d="M658 741.500h989" stroke={M} /><path d="M790 741.500h850" stroke="#a03048" strokeDasharray="5 20" />
    {[953, 1014, 1081, 1158, 1236, 1303, 1364, 1426].map((x, i) => (
      <g key={x}><circle cx={x} cy="559" r="6.500" stroke="#3ed8e2" strokeWidth="1.500" shapeRendering="auto" /><rect x={i > 3 ? x - 5 : x - 2} y="555" width={i > 3 ? 8 : 4} height="8" fill="#00f4fa" /><path d={`M${x + 0.5} 566v204`} stroke="#cf6a78" strokeDasharray="15 4 3 4" /></g>
    ))}
    <g stroke="#76e6ea" strokeDasharray="5 2">
      <rect x="693.5" y="592.5" width="63" height="154" rx="3" /><rect x="1561.5" y="587.5" width="88" height="158" rx="3" />
      <rect x="943.5" y="701.5" width="78" height="48" rx="3" /><rect x="1378.5" y="701.5" width="41" height="44" rx="3" />
    </g>
    <g shapeRendering="auto">{marker(740, 762)}{marker(1004, 765)}{marker(1410, 762)}{marker(1575, 762)}</g>
    <path d="M1650 604h35v4h-35zM1671 609h14v5h-14zM1650 669h35v5h-35zM1674 674h11v5h-11zM1658 704h27v6h-27zM1676 710h9v5h-9zM1650 736h35v5h-35zM1680 741h5v4h-5z" fill="#83f3f6" />
    {[608, 674, 710, 742].map((y) => <path key={y} d={`M1695 ${y - 4}c-8-2-8 11 0 8v-3h-3v-3h3z`} fill="#83f3f6" stroke="#64dfe6" />)}
    <path d="M678.500 589v157M674 593.500h53M674 741.500h53M701.500 684v99M697 777.500h953M1646.500 684v99M1648.500 593v149" stroke="#000" />
    <path d="M675 597l7-7M675 745l7-7M698 781l7-7M1643 781l7-7" stroke="#000" />
    <path d="M672 662h5v10h-5zM1168 771h12v5h-12z" fill="#000" />
    <path d="M969 779h26v4h-26zM1430 753h23v4h-23z" fill="#7b7b7b" />
    <path d="M959 776l4 6h5M996 782h7l4-8M1399 742l25 13h6" stroke="#555" />
  </Sheet>
);

/* ---------- data ---------- */
const menus = ["Home", "Insert", "Annotate", "Parametric", "View", "Manage", "Output", "Collaborate"];
const sheets = [
  "1 - BLVD OFFICE_ELEVATI", "2 - BLVD OFFICE_PLAN-AU", "3 - BLVD OFFICE_PLAN-AU", "4 - 1st Floor Plan_V2 - Flo",
  "5 - AutoCAD_LoftBed_Dra", "6 - AutoCAD_LoftBed_Dra", "7 - ROBOT_FINISHED_18 -", "8 - ROBOT_FINISHED_18 -",
];

export default function App() {
  return (
    <>
      <Global />
      <Frame>
        <TitleBar>
          <Logo>
            <svg width="31" height="28" viewBox="0 0 31 28" aria-label="AutoCAD"><path d="M0 2l5-2v24l-5 4z" fill="#f4628c" /><path d="M5 0h26v24H5z" fill="#e40a4c" /><text x="18" y="18" fontSize="17" fontWeight="700" fill="#fff" textAnchor="middle" fontFamily="Open Sans, sans-serif">A</text></svg>
            <LogoLabel>LT</LogoLabel>
          </Logo>
          <IconButton aria-label="New"><NewIcon /></IconButton>
          <IconButton aria-label="Open"><OpenIcon /></IconButton>
          <IconButton aria-label="Save"><SaveIcon /></IconButton>
          <IconButton aria-label="Save as"><SaveAsIcon /></IconButton>
          <IconButton aria-label="Open from mobile"><MobileOpenIcon /></IconButton>
          <IconButton aria-label="Save to mobile"><MobileSaveIcon /></IconButton>
          <IconButton aria-label="Plot"><PrintIcon /></IconButton>
          <IconButton aria-label="Undo"><UndoIcon /></IconButton>
          <IconButton aria-label="Undo list" $w={18}><Caret /></IconButton>
          <IconButton aria-label="Redo"><UndoIcon color="#858c98" flip /></IconButton>
          <IconButton aria-label="Redo list" $w={18}><Caret color="#a4aab4" /></IconButton>
          <IconButton aria-label="Customize" $w={24}><I w={12} h={12}><path d="M0 0h12v2H0zM0 5h12l-6 6z" fill="#dfe2e6" /></I></IconButton>
          <Share><PlaneIcon />Share</Share>
          <FileName>BLVD OFFICE_ELEVATION-AUTOCAD.dwg</FileName>
          <I w={6} h={12}><path d="M0 0v12l6-6z" fill="#dfe5df" /></I>
          <Search aria-label="Search" placeholder="Type a keyword or phrase" />
          <IconButton aria-label="Find" $w={24}><GlassIcon /></IconButton>
          <User><UserIcon />nishant.naikVY...</User>
          <Caret />
          <Apps aria-label="Apps"><AppsIcon /><Caret /></Apps>
          <IconButton as="span" $w={22}><Rule /></IconButton>
          <IconButton aria-label="Help" $w={26}><HelpIcon /></IconButton>
          <IconButton aria-label="Help list" $w={28}><Caret /></IconButton>
          <WindowControls>
            <IconButton aria-label="Minimize" $w={38}><I w={12} h={14}><path d="M0 11h12v3H0z" fill="#d9dcd8" /></I></IconButton>
            <IconButton aria-label="Maximize" $w={38}><I w={19} h={18}><path d="M1 2h17v15H1z" stroke="#d9dce0" strokeWidth="2" /><path d="M0 0h19v3H0z" fill="#d9dce0" /></I></IconButton>
            <IconButton aria-label="Close" $w={36}><Cross size={16} color="#dfe2e4" /></IconButton>
          </WindowControls>
        </TitleBar>

        <MenuBar>
          {menus.map((m) => <MenuTab key={m} $on={m === "View"}>{m}</MenuTab>)}
          <MenuTab $context>Layout</MenuTab>
          <MenuExtra aria-label="Minimize ribbon"><I w={23} h={11}><path d="M0 0h23v11H0z" fill="#f6f7f8" /><path d="M8 7.500h7l-3.500-4z" fill="#3d4453" /></I><Caret /></MenuExtra>
        </MenuBar>

        <Ribbon>
          <Group $w={162}>
            <Tools $pad={5}>
              <Big $w={57} $on><UcsIcon />{"UCS\nIcon"}</Big>
              <Big $w={94} $on><NavBarIcon />{"Navigation\nBar"}</Big>
            </Tools>
            <GroupName><GroupText>Viewport Tools <Caret w={12} /></GroupText></GroupName>
          </Group>
          <Group $w={310}>
            <Tools $pad={6}>
              <Stack>
                <ViewBox><ViewIcon /><Select aria-label="View"><option>Unsaved View</option></Select><Caret w={12} color="#dfe8df" /></ViewBox>
                <Row $gap={5}><NewViewIcon />New View</Row>
                <Row $gap={5}><ViewManagerIcon />View Manager</Row>
              </Stack>
            </Tools>
            <GroupName><GroupText>Named Views</GroupText></GroupName>
          </Group>
          <Group $w={262}>
            <Tools $pad={14}>
              <Big $w={120} disabled><VportIcon />{"Viewport\nConfiguration"}</Big>
              <DownMark><Caret w={7} /></DownMark>
              <Stack $ml={16}>
                <Row disabled><NamedVpIcon />Named</Row>
                <Row disabled><JoinVpIcon />Join</Row>
                <Row disabled><RestoreVpIcon />Restore</Row>
              </Stack>
            </Tools>
            <GroupName><GroupText>Model Viewports</GroupText></GroupName>
          </Group>
          <Group $w={90}>
            <Tools $pad={1}><Big $w={86}><CompareIcon />{"DWG\nCompare"}</Big></Tools>
            <GroupName><GroupText>Compare</GroupText></GroupName>
          </Group>
          <Group $w={74}>
            <Tools $pad={1}><Big $w={71}><HistoryIcon />{"DWG\nHistory"}</Big></Tools>
            <GroupName><GroupText>History</GroupText></GroupName>
          </Group>
          <Group $w={438}>
            <Tools $pad={1}>
              <Big $w={74}><ToolPalIcon />{"Tool\nPalettes"}</Big>
              <Big $w={84}><PropsIcon />Properties</Big>
              <Big $w={64}><BlocksIcon />Blocks</Big>
              <Big $w={54}><CountIcon />Count</Big>
              <Big $w={82} $on><SheetSetIcon />{"Sheet Set\nManager"}</Big>
              <Mini>
                <MiniButton aria-label="Command line" $on><TermIcon /></MiniButton>
                <MiniButton aria-label="Markup"><MarkupIcon /></MiniButton>
                <MiniButton aria-label="Layers"><LayersIcon /></MiniButton>
                <MiniButton aria-label="Calculator"><CalcIcon /></MiniButton>
                <MiniButton aria-label="DesignCenter"><DesignIcon /></MiniButton>
                <MiniButton aria-label="External references" $on><ClipIcon /></MiniButton>
              </Mini>
            </Tools>
            <GroupName><GroupText>Palettes <Caret w={12} /></GroupText></GroupName>
          </Group>
          <Group $w={400} $last>
            <Tools $pad={16}>
              <Big $w={80}><SwitchIcon />{"Switch\nWindows"}</Big>
              <DownMark><Caret w={8} /></DownMark>
              <Big $w={57} $on><FileTabsIcon />{"File\nTabs"}</Big>
              <Big $w={61} $on><LayoutTabsIcon />{"Layout\nTabs"}</Big>
              <Stack $ml={9}>
                <Row><TileHIcon />Tile Horizontally</Row>
                <Row><TileVIcon />Tile Vertically</Row>
                <Row><CascadeIcon />Cascade</Row>
              </Stack>
            </Tools>
            <GroupName>
              <GroupText>Interface</GroupText>
              <IconButton aria-label="Interface options" $w={20}><I w={9} h={9}><path d="M1 1l6 6M8 2v6H2" stroke="#dfe2e6" strokeWidth="2" /></I></IconButton>
            </GroupName>
          </Group>
        </Ribbon>

        <TabStrip $h={41}>
          <Slash /><FileTab $w={63}>Start</FileTab>
          <Slash /><FileTab $w={143}>Sections_01*</FileTab>
          <ActiveTab $w={383} $slant={14}>BLVD OFFICE_ELEVATION-AUTOCAD*<IconButton aria-label="Close tab" $w={12}><Cross size={12} color="#b5bac2" /></IconButton></ActiveTab>
          <FileTab $w={292}>BLVD OFFICE_PLAN-AUTOCAD*</FileTab>
          <Slash /><FileTab $w={180}>1st Floor Plan_V2</FileTab>
          <Slash /><FileTab $w={341}>AutoCAD_LoftBed_Drawings_Torpedo</FileTab>
          <Slash /><FileTab $w={219}>ROBOT_FINISHED_18*</FileTab>
          <Slash /><IconButton aria-label="New tab" $w={49}><Plus /></IconButton><Slash />
        </TabStrip>

        <Workspace>
          <Drawing />
          <Dock />
          <DocControls>
            <IconButton aria-label="Minimize drawing" $w={30}><I w={20} h={16}><path d="M1 7h18v7H1z" fill="#f4f4f4" stroke="#555" strokeWidth="2" /></I></IconButton>
            <IconButton aria-label="Restore drawing" $w={30}><I w={18} h={18}><path d="M5 1h12v12H5z" fill="#fff" stroke="#444" strokeWidth="2" /><path d="M1 5h12v12H1z" fill="#fff" stroke="#444" strokeWidth="2" /><path d="M5 8h4v5H5z" stroke="#444" strokeWidth="2" /></I></IconButton>
            <IconButton aria-label="Close drawing" $w={30}><I w={18} h={18}><path d="M3 3l12 12M15 3L3 15" stroke="#333" strokeWidth="6" /><path d="M3 3l12 12M15 3L3 15" stroke="#fff" strokeWidth="3" /></I></IconButton>
          </DocControls>
          <NavPane>
            <svg width="45" height="189" viewBox="0 0 45 189" fill="none" stroke="#8b8b8b" strokeWidth="2" aria-hidden="true">
              <path d="M31 3h9v9h-9zM33 5l5 5M38 5l-5 5M8 15h32M8 67h32" strokeWidth="1" />
              <path d="M12 27h20v14M12 27c-6 3-8 9-8 14 0 8 6 14 14 14" /><circle cx="18" cy="41" r="7" />
              <text x="22" y="59" fontSize="12" fontWeight="700" fill="#8a939b" stroke="none" fontFamily="Open Sans, sans-serif">2D</text>
              <path d="M15 106L5 92c-1-3 2-4 4-1l5 5-3-14c0-3 3-3 4 0l3 9-1-14c0-3 4-3 4 0l2 13 2-12c1-3 4-2 4 0l-1 13 4-8c1-2 4-1 3 1l-4 15-3 7z" />
              <path d="M5 116l25 24M29 116L5 140M5 121v-5h5M24 116h5v5M5 135v5h5" /><circle cx="29" cy="138" r="7" /><path d="M34 143l8 7" strokeWidth="4" />
              <path d="M20 162h6l-3 3z" strokeWidth="1" /><circle cx="36" cy="183" r="5" strokeWidth="1" /><path d="M33 183h6" strokeWidth="1" />
            </svg>
          </NavPane>

          <Refs aria-label="External references">
            <Strip $w={36}>
              <Vertical>EXTERNAL REFERENCES</Vertical>
              <Emblem $pb={3}><ClipIcon /></Emblem>
            </Strip>
            <RefsBody>
              <BarHead><ListIcon /><DetailIcon /></BarHead>
              <ListBox $h={276}>
                <Files>
                  <colgroup><col /><col width="89" /><col width="92" /></colgroup>
                  <thead><tr><th /><th>Size</th><th>Type</th></tr></thead>
                  <tbody><tr><td /><td>1.12 MB</td><td>Current</td></tr></tbody>
                </Files>
                <ScrollBar aria-label="Scroll right"><I w={9} h={13}><path d="M1 1l6 5.500L1 12" stroke="#505050" strokeWidth="2.500" /></I></ScrollBar>
              </ListBox>
              <Splitter />
              <BarHead><DocIcon /><ImageIcon /><IconButton aria-label="Preview options" $w={20}><Caret w={12} /></IconButton></BarHead>
              <ListBox />
            </RefsBody>
          </Refs>

          <SetPalette aria-label="Sheet set manager">
            <Shell>
              <Strip $w={35}>
                <StripIcons>
                  <Cross color="#b9bcc4" /><PinIcon /><GearIcon s={15} />
                </StripIcons>
                <Vertical>SHEET SET MANAGER</Vertical>
                <Emblem><SheetSetIcon s={24} bg={c.strip} /></Emblem>
              </Strip>
              <SetBody>
                <SetTools>
                  <SetPick><Select aria-label="Sheet set"><option>Ne...</option></Select><Caret w={16} /></SetPick>
                  <IconButton aria-label="Publish DWF" $w={29}><DwfIcon /></IconButton>
                  <IconButton aria-label="DWF options" $w={29}><Caret w={16} /></IconButton>
                  <IconButton aria-label="Publish" $w={29}><PrintGoIcon /></IconButton>
                  <IconButton aria-label="Publish options" $w={29}><Caret w={16} /></IconButton>
                  <IconButton aria-label="Sheet selections" $w={29}><TreeSaveIcon /></IconButton>
                  <IconButton aria-label="Selection options" $w={29}><Caret w={16} /></IconButton>
                </SetTools>
                <SheetsBox>
                  <SheetsHead>Sheets<RefreshIcon /></SheetsHead>
                  <TreeRoot><SheetSetIcon s={24} bg={c.panel} />New Sheet Set (1)</TreeRoot>
                  <Tree>
                    {sheets.map((s, i) => <Leaf key={s}><SheetLeafIcon /><LeafText $on={i > 5}>{s}</LeafText></Leaf>)}
                  </Tree>
                </SheetsBox>
              </SetBody>
            </Shell>
            <SideTabs>
              {["Sheet List", "Sheet Views", "Model Views"].map((t, i) => <SideTab key={t} $on={i === 0}><Vertical>{t}</Vertical></SideTab>)}
            </SideTabs>
          </SetPalette>

          <Command>
            <CommandTools>
              <I w={3} h={26}><path d="M1.500 0v26" stroke="#d5d8dd" strokeWidth="2" strokeDasharray="3 3" /></I>
              <Cross size={14} color="#bcc0c8" />
              <IconButton aria-label="Customize command line" $w={36}><WrenchIcon /></IconButton>
            </CommandTools>
            <CommandField>
              <CmdIcon /><Caret w={11} color="#50565b" />
              <CommandInput aria-label="Command" placeholder="Type a command" />
              <I w={11} h={6}><path d="M0 6h11L5.500 0z" fill="#555" /></I>
            </CommandField>
          </Command>
        </Workspace>

        <Bottom>
          <TabStrip $h={37}>
            <Slash /><FileTab $w={75}>Model</FileTab>
            <ActiveTab $w={118} $slant={15}>Layout1</ActiveTab>
            <FileTab $w={88}>Layout2</FileTab>
            <Slash /><IconButton aria-label="New layout" $w={50}><Plus /></IconButton><Slash />
          </TabStrip>
          <Status>
            <StatusBox><Paper>PAPER</Paper></StatusBox>
            <StatusBox>
              <StatusButton aria-label="Ortho"><I w={25} h={25}><path d="M1 0v24h24M1 17h6v7" stroke="#eceef0" strokeWidth="1.500" /></I></StatusButton>
              <StatusButton aria-label="Polar tracking" $on><I w={26} h={24}><circle cx="11" cy="12" r="9.500" stroke="#fff" strokeWidth="1.500" /><path d="M11 12h15M11 12L22 1M19 6c3 3 3 8 1 12" stroke="#fff" strokeWidth="1.300" /></I></StatusButton>
              <StatusButton aria-label="Polar options" $w={26}><Caret w={12} /></StatusButton>
              <StatusButton aria-label="Isometric drafting"><I w={20} h={24}><path d="M10 0v24" stroke="#50c56a" /><path d="M1 2l18 19" stroke="#e0485a" /><path d="M8 10h4v4H8z" fill="#3d4453" stroke="#fff" /></I></StatusButton>
              <StatusButton aria-label="Isometric options" $w={25}><Caret w={12} /></StatusButton>
              <StatusButton aria-label="Object snap tracking" $on><I w={24} h={24}><path d="M18 2L2 20h21" stroke="#fff" strokeWidth="1.500" /><path d="M8 9h5v5H8z" fill="#fff" /></I></StatusButton>
              <StatusButton aria-label="Object snap" $on $w={36}><I w={26} h={26}><path d="M9 5h15v19H4V10" stroke="#fff" strokeWidth="1.500" /><path d="M1 1h6v7H1z" stroke="#fff" strokeWidth="1.500" /></I></StatusButton>
              <StatusButton aria-label="Snap options" $w={25}><Caret w={12} /></StatusButton>
            </StatusBox>
            <StatusBox>
              <StatusButton aria-label="Selection cycling"><I w={26} h={26}><path d="M8 1h17v24H1V10" stroke="#e5e7ea" strokeWidth="1.500" strokeDasharray="4 3" /><path d="M10 12h11v10H10z" stroke="#fff" strokeWidth="1.500" /><path d="M0 0l8 2-6 5z" fill="#fff" /></I></StatusButton>
              <StatusButton aria-label="Annotation visibility" $w={36}><I w={26} h={26}><path d="M10 0l4 14 6 11-7-6-2-2-3 2-8 6 6-11z" fill="#dfe2e4" /><circle cx="20" cy="6" r="4" stroke="#dfe2e4" strokeWidth="1.500" /></I></StatusButton>
              <StatusButton aria-label="Annotation scale"><I w={26} h={26}><path d="M11 0l4 14 6 11-7-6-2-2-3 2-8 6 6-11z" fill="#dfe2e4" /><path d="M21 1l-4 6h3l-2 5 6-7h-3l2-4z" fill="#fff" /></I></StatusButton>
            </StatusBox>
            <StatusBox>
              <StatusButton aria-label="Workspace settings"><GearIcon s={24} color="#dcdfe1" /></StatusButton>
              <StatusButton aria-label="Workspace options" $w={25}><Caret w={12} /></StatusButton>
              <StatusButton aria-label="Annotation monitor"><Plus size={23} /></StatusButton>
            </StatusBox>
            <StatusBox><StatusButton aria-label="Isolate objects" $w={34}><I w={25} h={26}><path d="M2 1h8v10H2zM10 15l6 10H5z" stroke="#e5e7ea" strokeWidth="1.500" /><ellipse cx="19" cy="11" rx="5" ry="6" stroke="#e5e7ea" strokeWidth="1.500" /></I></StatusButton></StatusBox>
            <StatusBox><StatusButton aria-label="Hardware" $w={40}><I w={38} h={34}><path d="M1 0h22l9 9v22H1z" fill="#3a74b4" /><path d="M22 0v10h10z" fill="#a5c8ea" /><path d="M1 20h14v12H1z" fill="#fbb81f" /><path d="M1 8h18M9 0v20" stroke="#fff" strokeWidth="2.500" /><circle cx="9" cy="8" r="3" fill="#3a74b4" stroke="#fff" strokeWidth="1.500" /><path d="M17 24l6 7L36 17" stroke="#3fae49" strokeWidth="5" /></I></StatusButton></StatusBox>
            <StatusBox>
              <StatusButton aria-label="Clean screen"><I w={24} h={18}><path d="M1 1h22v16H1z" stroke="#e5e7ea" strokeWidth="1.500" /><path d="M16 4h4v4M4 10v4h4M20 4l-4 4M4 14l4-4" stroke="#e5e7ea" strokeWidth="1.500" /></I></StatusButton>
              <StatusButton aria-label="Customization"><I w={24} h={22}><path d="M0 2h24M0 11h24M0 20h24" stroke="#e5e7ea" strokeWidth="2.500" /></I></StatusButton>
            </StatusBox>
          </Status>
        </Bottom>
      </Frame>
    </>
  );
}
